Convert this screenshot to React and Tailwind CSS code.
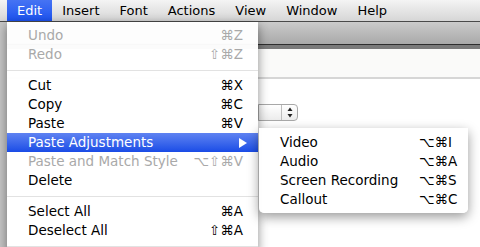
import React from 'react';

const menuBar = ['Edit', 'Insert', 'Font', 'Actions', 'View', 'Window', 'Help'];

const editItems = [
  { label: 'Undo', keys: '⌘Z', disabled: true },
  { label: 'Redo', keys: '⇧⌘Z', disabled: true },
  { sep: true },
  { label: 'Cut', keys: '⌘X' },
  { label: 'Copy', keys: '⌘C' },
  { label: 'Paste', keys: '⌘V' },
  { label: 'Paste Adjustments', submenu: true, active: true },
  { label: 'Paste and Match Style', keys: '⌥⇧⌘V', disabled: true },
  { label: 'Delete' },
  { sep: true },
  { label: 'Select All', keys: '⌘A' },
  { label: 'Deselect All', keys: '⇧⌘A' },
  { sep: true },
];

const pasteItems = [
  { label: 'Video', keys: '⌥⌘I' },
  { label: 'Audio', keys: '⌥⌘A' },
  { label: 'Screen Recording', keys: '⌥⌘S' },
  { label: 'Callout', keys: '⌥⌘C' },
];

const font = { fontFamily: '"DejaVu Sans", "Liberation Sans", sans-serif' };

export default function App() {
  return (
    <div className="relative w-[480px] h-[247px] overflow-hidden bg-white text-[13px] text-black" style={font}>
      {/* menu bar */}
      <div className="flex h-[22px] items-stretch border-b border-[#4a4a4a] bg-gradient-to-b from-[#f4f4f4] to-[#d6d6d6] pl-[7px]">
        {menuBar.map((m, i) => (
          <div
            key={m}
            className={
              i === 0
                ? 'flex items-center px-[10px] text-white bg-gradient-to-b from-[#4673f3] to-[#1b52f0]'
                : 'flex items-center px-[10px]'
            }
          >
            {m}
          </div>
        ))}
      </div>

      {/* window behind the menu */}
      <div className="flex h-[225px]">
        <div className="w-[7px] bg-[#c6c6c6]" />
        <div className="flex-1 flex flex-col">
          <div className="h-[23px] bg-gradient-to-b from-[#cbcbcb] to-[#a9a9a9] border-b border-[#2e2e2e]" />
          <div className="h-[4px] bg-[#7a7a7a]" />
          <div className="h-[30px] bg-[#fafaf9] border-b-2 border-[#d6d6d6]" />
          <div className="flex-1 bg-white">
            <div className="ml-[251px] mt-[25px] flex h-[17px] w-[40px] rounded-r-[4px] border border-[#a8a8a8] bg-gradient-to-b from-[#ffffff] to-[#ececec]">
              <div className="flex-1" />
              <div className="flex w-[16px] flex-col items-center justify-center border-l border-[#bdbdbd] gap-[1px]">
                <svg width="6" height="11" viewBox="0 0 6 11">
                  <path d="M3 0.5 L5.5 4 L0.5 4 Z" fill="#222" />
                  <path d="M3 10.5 L5.5 7 L0.5 7 Z" fill="#222" />
                </svg>
              </div>
            </div>
          </div>
        </div>
      </div>

      {/* Edit menu */}
      <div className="absolute left-[7px] top-[22px] w-[251px] bg-white/[0.97] pt-[4px] text-[13.5px] shadow-[0_3px_10px_rgba(0,0,0,0.45)]">
        {editItems.map((it, i) =>
          it.sep ? (
            <div key={i} className="flex h-[12px] items-center">
              <div className="h-[1px] w-full bg-[#e2e2e2]" />
            </div>
          ) : (
            <div
              key={i}
              className={
                'flex h-[19px] items-center justify-between pl-[21px] pr-[15px] ' +
                (it.active
                  ? 'bg-gradient-to-b from-[#5f82f1] to-[#1a4be6] text-white'
                  : it.disabled
                  ? 'text-[#a9a9a9]'
                  : '')
              }
            >
              <span>{it.label}</span>
              {it.submenu ? (
                <svg width="8" height="10" viewBox="0 0 8 10" className="mr-[-4px]">
                  <path d="M0 0 L8 5 L0 10 Z" fill="#fff" />
                </svg>
              ) : (
                <span>{it.keys}</span>
              )}
            </div>
          )
        )}
      </div>

      {/* Paste Adjustments submenu */}
      <div className="absolute left-[259px] top-[128px] w-[209px] rounded-b-[5px] bg-white/[0.97] pt-[5px] pb-[4px] text-[13.5px] shadow-[0_4px_12px_rgba(0,0,0,0.4)]">
        {pasteItems.map((it) => (
          <div key={it.label} className="flex h-[19px] items-center pl-[21px]">
            <span className="w-[139px]">{it.label}</span>
            <span>{it.keys}</span>
          </div>
        ))}
      </div>
    </div>
  );
}
